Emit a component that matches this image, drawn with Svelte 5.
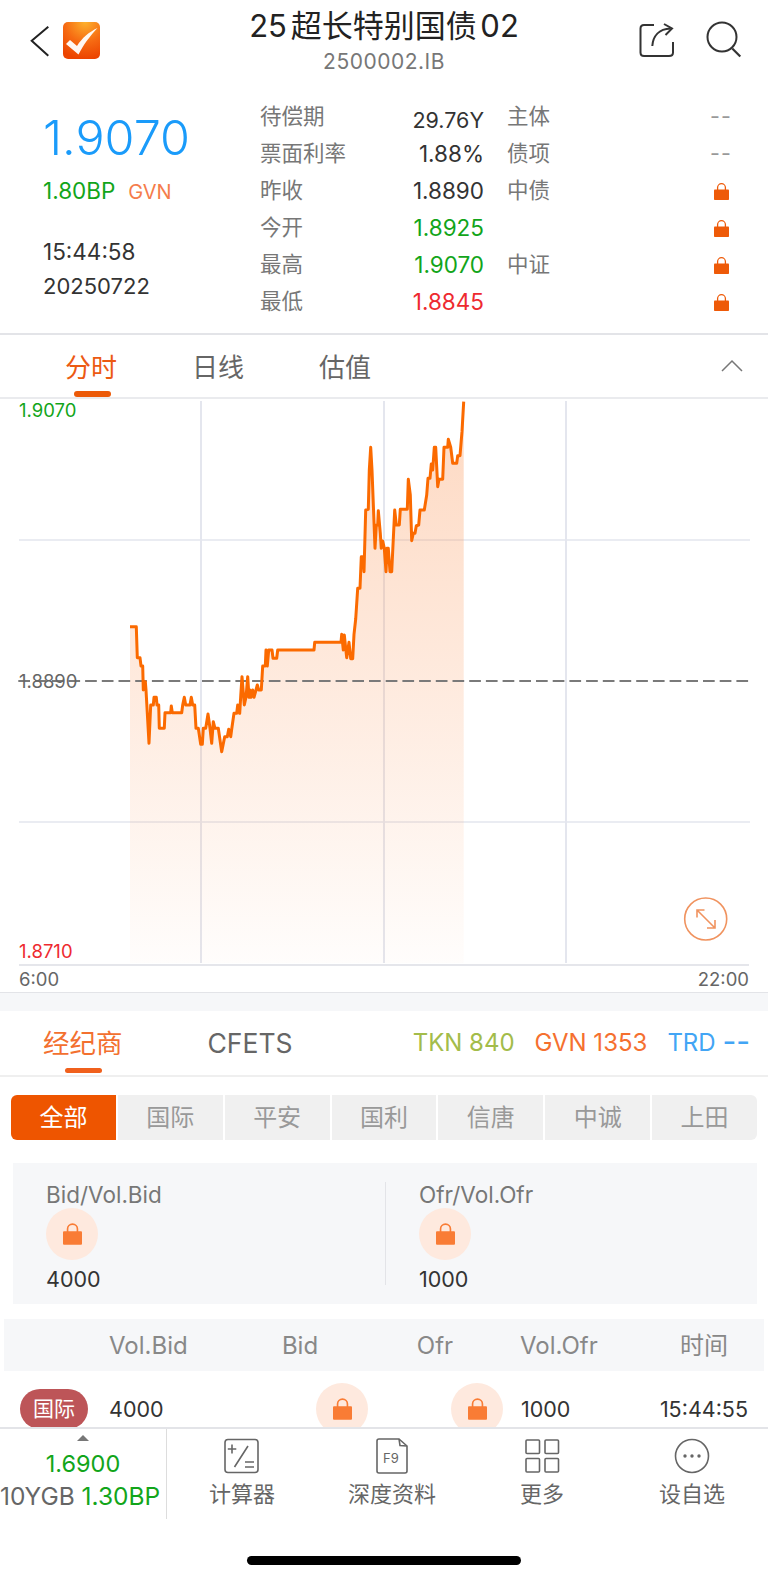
<script>
  // traced from the intraday curve, page coordinates
  const partA = [[0,50],[19,50],[22,143],[30,143],[33,168],[38,168],[40,240],[46,215],[48,240],[57,400],[62,285],[70,285],[72,262],[79,262],[81,285],[86,285],[88,355],[103,355],[105,308],[122,308],[124,288],[127,308],[155,308],[158,285],[163,262],[167,285],[180,285],[184,262],[188,285],[194,285],[198,355],[205,355],[212,403],[217,403],[220,355],[227,355],[234,312],[240,355],[245,400],[250,335],[255,355],[265,355],[275,425],[284,380],[292,380],[296,358],[302,380],[305,358],[312,310],[320,310],[323,285],[329,310],[332,260],[336,200],[343,285],[348,262],[353,200],[357,262],[360,240],[363,262],[368,240],[372,262],[378,240],[382,225],[386,240],[394,240],[398,168],[406,168],[408,120],[412,168],[416,120],[426,120],[429,145],[440,145],[443,120]]
    .map(([x, y]) => [130 + x / 3, 610 + y / 3]);
  const partB = [[42,780],[44,757],[123,757],[125,733],[130,780],[133,735],[140,803],[147,757],[152,806],[158,806],[162,733],[167,687],[173,595],[180,595],[184,500],[189,500],[192,545],[197,360],[205,358],[208,240],[212,172],[216,240],[225,475],[229,405],[233,405],[235,362],[241,430],[244,475],[248,453],[253,475],[258,545],[261,475],[265,475],[270,545],[275,545],[284,360],[289,405],[298,405],[301,358],[322,358],[325,268],[331,315],[335,452],[340,430],[345,430],[349,407],[356,405],[360,360],[373,360],[380,315],[384,265],[390,265],[394,222],[398,240],[403,172],[407,172],[413,290],[417,268],[428,268],[432,172],[443,172],[445,148],[452,172],[458,220],[470,220],[473,197],[480,197],[486,125],[491,35]]
    .map(([x, y]) => [300 + x / 3, 390 + y / 3]);
  const pts = [...partA, ...partB];
  const line = pts.map(([x, y]) => `${x.toFixed(1)},${y.toFixed(1)}`).join(" ");
  const area = `130,963 ${line} 463.7,963`;

  const rows = [
    { label: "待偿期", value: "29.76Y", side: "主体", end: "--" },
    { label: "票面利率", value: "1.88%", side: "债项", end: "--" },
    { label: "昨收", value: "1.8890", side: "中债", end: "lock" },
    { label: "今开", value: "1.8925", tone: "up", side: "", end: "lock" },
    { label: "最高", value: "1.9070", tone: "up", side: "中证", end: "lock" },
    { label: "最低", value: "1.8845", tone: "down", side: "", end: "lock" },
  ];
  const brokers = ["全部", "国际", "平安", "国利", "信唐", "中诚", "上田"];
</script>

{#snippet lock(w, h)}
  <svg class="lock" width={w} height={h} viewBox="0 0 15 17" aria-hidden="true">
    <path d="M3.6 7V4.6a3.9 3.9 0 0 1 7.8 0V7" fill="none" stroke="currentColor" stroke-width="1.3" />
    <rect x="0" y="6.4" width="15" height="10.6" rx="0.8" fill="currentColor" />
  </svg>
{/snippet}

<div class="page">
  <header class="top">
    <div class="top-left">
      <svg width="20" height="32" viewBox="0 0 20 32" fill="none" aria-label="Back">
        <path d="M18.3 1.7 1.7 15.7l16.6 15" stroke="#222" stroke-width="2" />
      </svg>
      <svg class="logo" width="37" height="37" viewBox="0 0 37 37" aria-hidden="true">
        <defs>
          <radialGradient id="logoBg" cx="0.6" cy="0" r="1">
            <stop offset="0" stop-color="#fdb22e" />
            <stop offset="0.55" stop-color="#f66a12" />
            <stop offset="1" stop-color="#ec4400" />
          </radialGradient>
        </defs>
        <rect width="37" height="37" rx="5" fill="url(#logoBg)" />
        <path d="M3 22l4-4 7 6C19 16 26 10 34.500 6 27 14 21 22 15.500 32.500Z" fill="#fff" opacity="0.95" />
      </svg>
    </div>
    <div class="title">
      <div class="name">25 超长特别国债 02</div>
      <div class="code">2500002.IB</div>
    </div>
    <div class="top-right">
      <svg width="36" height="36" viewBox="0 0 36 36" fill="none" stroke="#333" stroke-width="2" aria-label="Share">
        <path d="M15 2H5Q1.500 2 1.500 5.500V29.500Q1.500 33 5 33H30Q34 33 34 29.500V19" />
        <path d="M13.300 23C14 13 20 6 31.500 5.500" />
        <path d="M25 1l8 4.500-6.500 6.500" />
      </svg>
      <svg class="search" width="38" height="38" viewBox="0 0 38 38" fill="none" stroke="#333" stroke-width="2" aria-label="Search">
        <circle cx="16" cy="16" r="14.500" />
        <path d="M26.300 27.500 34.300 35.500" stroke-width="2.200" />
      </svg>
    </div>
  </header>

  <section class="info">
    <div class="quote">
      <div class="price">1.9070</div>
      <div class="change"><span class="up">1.80BP</span><span class="src">GVN</span></div>
      <div class="stamp">15:44:58</div>
      <div class="stamp">20250722</div>
    </div>
    <div class="facts">
      {#each rows as r}
        <div class="fact">
          <span class="lab">{r.label}</span>
          <span class="val {r.tone ?? ''}">{r.value}</span>
          <span class="lab side">{r.side}</span>
          <span class="end">
            {#if r.end === "lock"}
              {@render lock(15, 17)}
            {:else}
              {r.end}
            {/if}
          </span>
        </div>
      {/each}
    </div>
  </section>

  <nav class="chart-tabs">
    <span class="tab active">分时</span>
    <span class="tab">日线</span>
    <span class="tab">估值</span>
    <svg class="fold" width="22" height="13" viewBox="0 0 22 13" fill="none" aria-hidden="true">
      <path d="M1 12 11 2l10 10" stroke="#777" stroke-width="1.500" />
    </svg>
  </nav>

  <section class="chart">
    <svg class="plot" width="768" height="593" viewBox="0 399 768 593" aria-hidden="true">
      <defs>
        <linearGradient id="areaFill" x1="0" y1="0" x2="0" y2="1">
          <stop offset="0" stop-color="#fb9a5e" stop-opacity="0.38" />
          <stop offset="0.6" stop-color="#fb9a5e" stop-opacity="0.17" />
          <stop offset="1" stop-color="#fb9a5e" stop-opacity="0.02" />
        </linearGradient>
      </defs>
      <g stroke="#e4e6ee" fill="none">
        <path d="M201 401V963M384 401V963M566 401V963" stroke-width="2" />
        <path d="M19 540H750M19 822H750" stroke-width="1.300" />
        <path d="M19 965H749" stroke="#dcdee4" stroke-width="1.500" />
      </g>
      <polygon points={area} fill="url(#areaFill)" />
      <path d="M18.300 681H750" stroke="#7a7a7a" stroke-width="2" stroke-dasharray="11.700 5" fill="none" />
      <polyline points={line} fill="none" stroke="#fb6a00" stroke-width="3" stroke-linejoin="round" />
      <g fill="none" stroke="#f0935f" stroke-width="1.600">
        <circle cx="705.700" cy="919" r="21" />
        <path d="M697.500 910.500 714.500 927.500M697 917.500V910H704.500M707 928H715V920" />
      </g>
    </svg>
    <span class="axis hi">1.9070</span>
    <span class="axis mid">1.8890</span>
    <span class="axis lo">1.8710</span>
    <span class="axis start">6:00</span>
    <span class="axis stop">22:00</span>
  </section>

  <div class="gap"></div>

  <div class="lower">
    <nav class="desk-tabs">
      <span class="desk active">经纪商</span>
      <span class="desk cfets">CFETS</span>
      <span class="venues">
        <span class="tkn">TKN 840</span>
        <span class="gvn">GVN 1353</span>
        <span class="trd">TRD <span class="dashes">--</span></span>
      </span>
    </nav>

    <div class="brokers">
      {#each brokers as b, i}
        <span class="broker" class:on={i === 0}>{b}</span>
      {/each}
    </div>

    <div class="best">
      <div class="side-col">
        <div class="best-lab">Bid/Vol.Bid</div>
        <div class="bubble">{@render lock(19, 22)}</div>
        <div class="best-val">4000</div>
      </div>
      <div class="side-col ofr">
        <div class="best-lab">Ofr/Vol.Ofr</div>
        <div class="bubble">{@render lock(19, 22)}</div>
        <div class="best-val">1000</div>
      </div>
    </div>

    <div class="thead">
      <span class="th-volbid">Vol.Bid</span>
      <span class="th-bid">Bid</span>
      <span class="th-ofr">Ofr</span>
      <span class="th-volofr">Vol.Ofr</span>
      <span class="th-time">时间</span>
    </div>

    <div class="trow">
      <span class="badge">国际</span>
      <span class="cell-volbid">4000</span>
      <div class="bubble">{@render lock(19, 22)}</div>
      <div class="bubble second">{@render lock(19, 22)}</div>
      <span class="cell-volofr">1000</span>
      <span class="cell-time">15:44:55</span>
    </div>
  </div>

  <footer class="bottom">
    <div class="bar">
      <div class="bench">
        <span class="tri"></span>
        <div class="bench-price up">1.6900</div>
        <div class="bench-line">10YGB <span class="up">1.30BP</span></div>
      </div>
      <div class="actions">
        <div class="action">
          <svg width="36" height="36" viewBox="0 0 36 36" fill="none" stroke="#666" stroke-width="1.600" aria-hidden="true">
            <rect x="1" y="1.500" width="33" height="33" rx="3" />
            <path d="M8 6.500v9M3.800 11h8.500M24 8 10.500 29M21 24h9M21 29h9" />
          </svg>
          <span>计算器</span>
        </div>
        <div class="action">
          <svg width="32" height="36" viewBox="0 0 32 36" fill="none" stroke="#666" stroke-width="1.600" aria-hidden="true">
            <path d="M23 1H3Q1 1 1 3V33Q1 35 3 35H29Q31 35 31 33V8Z" />
            <path d="M23 1 24 7.500 31 8" />
            <text x="7" y="25" class="f9">F9</text>
          </svg>
          <span>深度资料</span>
        </div>
        <div class="action">
          <svg width="36" height="36" viewBox="0 0 36 36" fill="none" stroke="#666" stroke-width="1.600" aria-hidden="true">
            <rect x="2" y="2" width="13.500" height="13.500" rx="1" />
            <rect x="21" y="2" width="13.500" height="13.500" rx="1" />
            <rect x="2" y="20.500" width="13.500" height="13.500" rx="1" />
            <rect x="21" y="20.500" width="13.500" height="13.500" rx="1" />
          </svg>
          <span>更多</span>
        </div>
        <div class="action">
          <svg width="36" height="36" viewBox="0 0 36 36" fill="none" aria-hidden="true">
            <circle cx="18" cy="18" r="16.500" stroke="#666" stroke-width="1.600" />
            <circle cx="11" cy="18" r="1.700" fill="#666" />
            <circle cx="18" cy="18" r="1.700" fill="#666" />
            <circle cx="25" cy="18" r="1.700" fill="#666" />
          </svg>
          <span>设自选</span>
        </div>
      </div>
    </div>
    <div class="home"></div>
  </footer>
</div>

<style>
  :global(body) {
    margin: 0;
    background: #fff;
  }

  .page {
    width: 768px;
    height: 1581px;
    display: flex;
    flex-direction: column;
    overflow: hidden;
    background: #fff;
    color: #333;
    font-family: Inter, "Noto Sans CJK SC", sans-serif;
    font-weight: 400;
  }

  .up { color: #12a51a; }
  .down { color: #ee2a2f; }

  .top {
    height: 90px;
    flex: none;
    display: grid;
    grid-template-columns: 1fr auto 1fr;
    box-sizing: border-box;
    padding: 25px 24px 0;
  }

  .top-left {
    display: flex;
    align-items: flex-start;
    gap: 13px;
    margin-left: 6px;
  }

  .logo { margin-top: -3px; }

  .top-left svg:first-child { flex: none; }

  .title { text-align: center; }

  .name {
    margin-top: -17px;
    font-size: 31px;
    line-height: 36px;
    color: #222;
    word-spacing: -5px;
    white-space: nowrap;
  }

  .code {
    font-size: 21px;
    line-height: 28px;
    color: #777;
    margin-top: 4px;
    letter-spacing: 0.5px;
  }

  .top-right {
    display: flex;
    justify-content: flex-end;
    align-items: flex-start;
    gap: 31px;
    margin-top: -2px;
  }

  .search { margin-top: -2px; }

  .info {
    height: 243px;
    flex: none;
    display: flex;
    border-bottom: 2px solid #e3e4e8;
  }

  .quote {
    width: 260px;
    flex: none;
    box-sizing: border-box;
    padding: 24px 0 0 43px;
  }

  .price {
    font-size: 48.500px;
    line-height: 48px;
    color: #1a9bfa;
    font-weight: 300;
  }

  .change {
    margin-top: 14px;
    font-size: 22.500px;
    line-height: 30px;
  }

  .src {
    margin-left: 13px;
    font-size: 20px;
    color: #f57c4b;
  }

  .change + .stamp { margin-top: 28px; }

  .stamp {
    font-size: 22.500px;
    line-height: 34px;
  }

  .stamp + .stamp { font-size: 22px; }

  .facts {
    padding-top: 8px;
  }

  .fact {
    height: 37px;
    display: grid;
    grid-template-columns: 110px 114px 222px 30px;
    align-items: center;
    font-size: 21.500px;
  }

  .lab {
    color: #777;
    padding-bottom: 5px;
  }

  .val {
    text-align: right;
    white-space: nowrap;
    font-size: 22.500px;
  }

  .fact:first-child .val {
    padding-top: 6px;
    font-size: 21.500px;
  }

  .side { margin-left: 23px; }

  .end {
    display: flex;
    justify-content: center;
    color: #999;
    letter-spacing: 1px;
    padding-bottom: 2px;
  }

  .lock {
    display: block;
    color: #ee5a08;
  }

  .end .lock { margin-top: 3px; }

  .chart-tabs {
    position: relative;
    height: 64px;
    flex: none;
    box-sizing: border-box;
    padding-left: 65px;
    display: flex;
    gap: 75px;
    border-bottom: 2px solid #eaebee;
  }

  .tab {
    position: relative;
    width: 52px;
    font-size: 26px;
    line-height: 65px;
    color: #666;
    white-space: nowrap;
  }

  .tab.active { color: #ec5a12; }

  .tab.active::after {
    content: "";
    position: absolute;
    left: 9px;
    right: 6px;
    bottom: 0;
    height: 6px;
    border-radius: 3px;
    background: #ec5a08;
  }

  .fold {
    position: absolute;
    right: 25px;
    top: 24px;
  }

  .chart {
    position: relative;
    height: 593px;
    flex: none;
    box-sizing: border-box;
  }

  .plot {
    display: block;
  }

  .axis {
    position: absolute;
    font-size: 18.500px;
    line-height: 20px;
    color: #666;
  }

  .hi { left: 19px; top: 1px; color: #12a51a; }
  .mid { left: 19px; top: 272px; }
  .lo { left: 19px; top: 542px; color: #ee2a2f; }
  .start { left: 19px; top: 570px; }
  .stop { right: 19px; top: 570px; }

  .gap {
    height: 19px;
    flex: none;
    box-sizing: border-box;
    background: #f6f7f9;
    border-top: 1.500px solid #e3e4e8;
  }

  .lower {
    height: 416px;
    flex: none;
    overflow: hidden;
  }

  .desk-tabs {
    height: 66px;
    box-sizing: border-box;
    display: flex;
    padding-left: 43px;
    border-bottom: 2px solid #efefef;
    white-space: nowrap;
  }

  .desk {
    position: relative;
    font-size: 26.500px;
    line-height: 64px;
  }

  .desk.active { color: #f3702f; }

  .desk.active::after {
    content: "";
    position: absolute;
    left: 22px;
    width: 37px;
    bottom: 2px;
    height: 5px;
    border-radius: 3px;
    background: #f0601c;
  }

  .cfets {
    margin-left: 85px;
    color: #666;
  }

  .venues {
    margin-left: auto;
    padding-right: 18px;
    display: flex;
    gap: 20px;
    font-size: 24px;
    line-height: 64px;
  }

  .tkn { color: #a3bc4a; }
  .gvn { color: #f5702f; }
  .trd { color: #42a5f5; }

  .dashes {
    font-size: 30px;
    line-height: 0;
    vertical-align: -1px;
  }

  .brokers {
    margin: 18px 11px 0;
    height: 45px;
    display: grid;
    grid-template-columns: repeat(7, 1fr);
    gap: 2px;
    border-radius: 6px;
    overflow: hidden;
  }

  .broker {
    background: #f0f0f0;
    color: #999;
    font-size: 24px;
    line-height: 45px;
    text-align: center;
  }

  .broker.on {
    background: #ee5500;
    color: #fff;
  }

  .best {
    margin: 23px 11px 0 13px;
    height: 141px;
    box-sizing: border-box;
    background: #f6f7f9;
    display: flex;
    padding: 19px 0 19px 33px;
  }

  .side-col {
    width: 339px;
    flex: none;
  }

  .ofr {
    padding-left: 33px;
    border-left: 1.500px solid #e3e4e8;
  }

  .best-lab {
    font-size: 22.500px;
    line-height: 26px;
    color: #777;
  }

  .bubble {
    width: 52px;
    height: 52px;
    border-radius: 50%;
    background: #fee9de;
    display: flex;
    align-items: center;
    justify-content: center;
    flex: none;
  }

  .bubble .lock { color: #f97c35; }

  .best-val {
    margin-top: 4px;
    font-size: 21.500px;
    line-height: 30px;
    color: #333;
  }

  .thead {
    margin: 15px 4px 0;
    height: 52px;
    display: flex;
    align-items: center;
    background: #f6f7f9;
    color: #888;
    font-size: 24px;
    white-space: nowrap;
  }

  .th-volbid { margin-left: 105px; width: 160px; }
  .th-bid { width: 62px; text-align: center; }
  .th-ofr { margin-left: 73px; width: 62px; text-align: center; }
  .th-volofr { margin-left: 54px; width: 118px; }
  .th-time { margin-left: 41px; width: 50px; text-align: center; padding-bottom: 4px; }

  .trow {
    height: 76px;
    display: flex;
    align-items: center;
    padding: 0 20px;
    font-size: 21.500px;
    box-sizing: border-box;
  }

  .badge {
    width: 68px;
    height: 40px;
    flex: none;
    border-radius: 20px;
    background: #bd5558;
    color: #fff;
    font-size: 21px;
    line-height: 40px;
    text-align: center;
  }

  .cell-volbid { margin-left: 21px; width: 207px; flex: none; }
  .bubble.second { margin-left: 83px; }
  .cell-volofr { margin-left: 18px; flex: 1; }

  .bottom {
    flex: 1;
    border-top: 2px solid #e3e4e8;
    position: relative;
  }

  .bar {
    height: 90px;
    display: flex;
  }

  .bench {
    position: relative;
    width: 167px;
    flex: none;
    box-sizing: border-box;
    border-right: 1px solid #ddd;
    text-align: center;
    font-size: 24.500px;
    white-space: nowrap;
  }

  .tri {
    position: absolute;
    left: 77px;
    top: 6px;
    width: 0;
    height: 0;
    border-left: 6.500px solid transparent;
    border-right: 6.500px solid transparent;
    border-bottom: 6px solid #777;
  }

  .bench-price {
    margin-top: 20px;
    line-height: 30px;
    font-size: 23.500px;
  }

  .bench-line {
    margin-top: 2px;
    line-height: 30px;
    color: #666;
    margin-right: 6px;
  }

  .actions {
    flex: 1;
    display: grid;
    grid-template-columns: repeat(4, 150px);
  }

  .action {
    display: flex;
    flex-direction: column;
    align-items: center;
    padding-top: 9px;
    color: #666;
    font-size: 22px;
    line-height: 30px;
  }

  .action svg {
    display: block;
    margin-bottom: 5px;
  }

  .f9 {
    font-size: 13px;
    fill: #666;
    stroke: none;
  }

  .home {
    position: absolute;
    left: 247px;
    top: 127px;
    width: 274px;
    height: 9px;
    border-radius: 5px;
    background: #000;
  }
</style>
